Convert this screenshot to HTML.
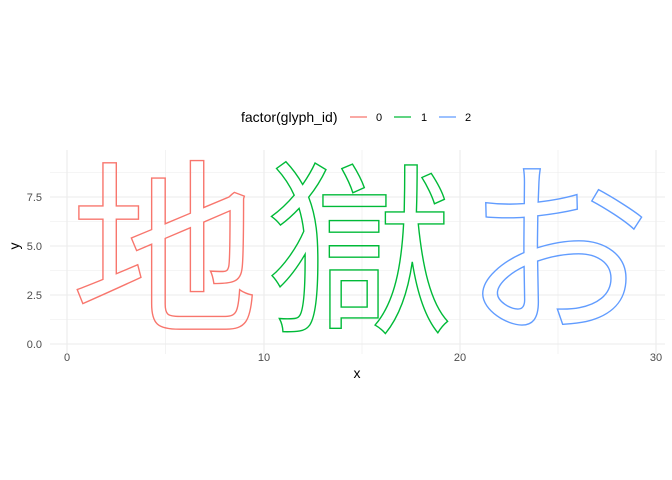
<!DOCTYPE html>
<html><head><meta charset="utf-8"><style>
body{margin:0;background:#fff;width:672px;height:480px;overflow:hidden}
svg{display:block}
text{font-family:"Liberation Sans",sans-serif}
</style></head><body>
<svg width="672" height="480" xmlns="http://www.w3.org/2000/svg">
<rect width="672" height="480" fill="#fff"/>
<g stroke="#ebebeb" stroke-width="0.6">
<line x1="50" x2="665" y1="319.5" y2="319.5"/><line x1="50" x2="665" y1="270.5" y2="270.5"/>
<line x1="50" x2="665" y1="221.5" y2="221.5"/><line x1="50" x2="665" y1="172.5" y2="172.5"/>
<line x1="165.5" x2="165.5" y1="150" y2="354"/><line x1="362" x2="362" y1="150" y2="354"/><line x1="558" x2="558" y1="150" y2="354"/>
</g>
<g stroke="#ebebeb" stroke-width="1.1">
<line x1="50" x2="665" y1="344" y2="344"/><line x1="50" x2="665" y1="295" y2="295"/>
<line x1="50" x2="665" y1="246" y2="246"/><line x1="50" x2="665" y1="197" y2="197"/>
<line x1="67" x2="67" y1="150" y2="354"/><line x1="264" x2="264" y1="150" y2="354"/><line x1="460" x2="460" y1="150" y2="354"/><line x1="656" x2="656" y1="150" y2="354"/>
</g>
<g font-size="188" fill="none" stroke-width="1.4" style='font-family:"Noto Sans CJK JP",sans-serif'>
<text x="71" y="318.5" stroke="#f8766d">地</text>
<text x="266" y="318.5" stroke="#00ba38">獄</text>
<text x="463" y="319" stroke="#619cff">お</text>
</g>
<g font-size="11" fill="#4d4d4d" text-anchor="end">
<text x="42" y="348">0.0</text><text x="42" y="299">2.5</text><text x="42" y="250">5.0</text><text x="42" y="201">7.5</text>
</g>
<g font-size="11" fill="#4d4d4d" text-anchor="middle">
<text x="67" y="361">0</text><text x="264" y="361">10</text><text x="460" y="361">20</text><text x="656" y="361">30</text>
</g>
<text x="357" y="378" font-size="14" text-anchor="middle">x</text>
<text x="0" y="0" font-size="14" text-anchor="middle" transform="translate(19,246) rotate(-90)">y</text>
<text x="241" y="122" font-size="14">factor(glyph_id)</text>
<line x1="350" x2="367" y1="117" y2="117" stroke="#f8766d" stroke-width="1.2"/>
<text x="376" y="121" font-size="11">0</text>
<line x1="394" x2="411" y1="117" y2="117" stroke="#00ba38" stroke-width="1.2"/>
<text x="421" y="121" font-size="11">1</text>
<line x1="439" x2="456" y1="117" y2="117" stroke="#619cff" stroke-width="1.2"/>
<text x="465" y="121" font-size="11">2</text>
</svg>
</body></html>
